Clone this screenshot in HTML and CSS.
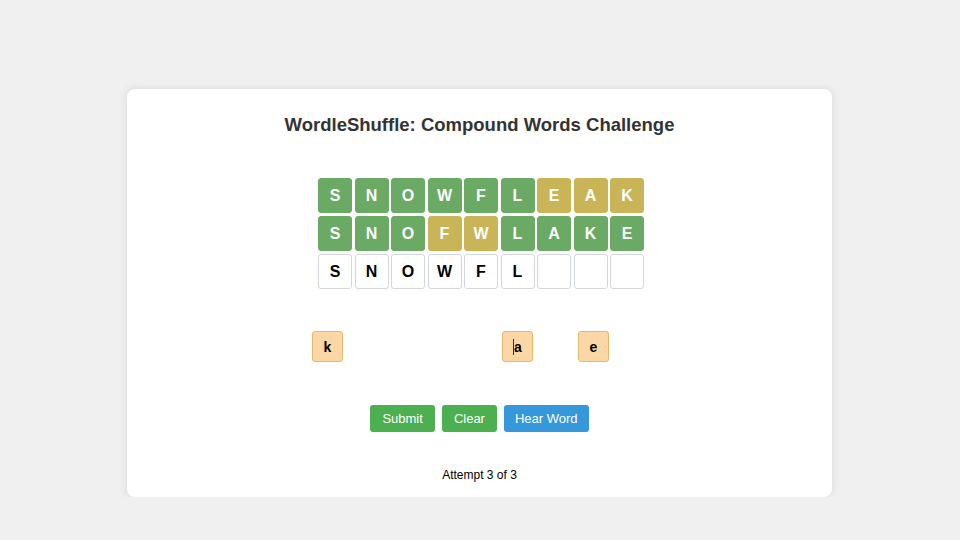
FILE: index.html
```html
<!DOCTYPE html>
<html lang="en">
<head>
    <meta charset="UTF-8">
    <meta name="viewport" content="width=device-width, initial-scale=1.0">
    <title>WordleShuffle</title>
    <link rel="stylesheet" href="styles.css">
</head>
<body>
    <div class="game-card">
        <h1 class="title">WordleShuffle: Compound Words Challenge</h1>

        <div class="board">
            <div class="row">
                <div class="tile correct">S</div>
                <div class="tile correct">N</div>
                <div class="tile correct">O</div>
                <div class="tile correct">W</div>
                <div class="tile correct">F</div>
                <div class="tile correct">L</div>
                <div class="tile present">E</div>
                <div class="tile present">A</div>
                <div class="tile present">K</div>
            </div>
            <div class="row">
                <div class="tile correct">S</div>
                <div class="tile correct">N</div>
                <div class="tile correct">O</div>
                <div class="tile present">F</div>
                <div class="tile present">W</div>
                <div class="tile correct">L</div>
                <div class="tile correct">A</div>
                <div class="tile correct">K</div>
                <div class="tile correct">E</div>
            </div>
            <div class="row">
                <div class="tile">S</div>
                <div class="tile">N</div>
                <div class="tile">O</div>
                <div class="tile">W</div>
                <div class="tile">F</div>
                <div class="tile">L</div>
                <div class="tile"></div>
                <div class="tile"></div>
                <div class="tile"></div>
            </div>
        </div>

        <div class="letter-pool">
            <div class="letter" style="left: 165px;">k</div>
            <div class="letter" style="left: 355px;"><span class="caret"></span>a</div>
            <div class="letter" style="left: 431px;">e</div>
        </div>

        <div class="controls">
            <button class="btn btn-green">Submit</button>
            <button class="btn btn-green">Clear</button>
            <button class="btn btn-blue">Hear Word</button>
        </div>

        <div class="attempts">Attempt 3 of 3</div>
    </div>
</body>
</html>
```

FILE: styles.css
```css
:root {
    --background-color: #f0f0f0;
    --text-color: #333;
    --correct: #6aaa64;
    --present: #c9b458;
    --tile-border: #d3d6da;
}

* {
    margin: 0;
    padding: 0;
    box-sizing: border-box;
    font-family: 'Liberation Sans', Arial, sans-serif;
}

body {
    background-color: var(--background-color);
    color: var(--text-color);
}

.game-card {
    width: 705px;
    margin: 89px 0 0 127px;
    padding: 25px 20px 14px;
    background-color: white;
    border-radius: 8px;
    box-shadow: 0 0 10px rgba(0, 0, 0, 0.1);
    text-align: center;
}

.title {
    font-size: 18.5px;
    line-height: 22px;
    font-weight: bold;
    color: #333;
}

.board {
    margin-top: 42px;
    padding-left: 3px;
    display: flex;
    flex-direction: column;
    align-items: center;
    gap: 3px;
}

.row {
    display: flex;
    gap: 2.5px;
}

.tile {
    width: 34px;
    height: 35px;
    border: 1px solid var(--tile-border);
    border-radius: 3px;
    display: flex;
    align-items: center;
    justify-content: center;
    font-size: 16px;
    font-weight: bold;
    color: #000;
    background-color: white;
}

.tile.correct {
    background-color: var(--correct);
    border-color: var(--correct);
    color: white;
}

.tile.present {
    background-color: var(--present);
    border-color: var(--present);
    color: white;
}

.letter-pool {
    position: relative;
    height: 31px;
    margin-top: 42px;
}

.letter {
    position: absolute;
    top: 0;
    width: 31px;
    height: 31px;
    background-color: #fad7a4;
    border: 1px solid #e9b96b;
    border-radius: 3px;
    display: flex;
    align-items: center;
    justify-content: center;
    font-size: 14px;
    font-weight: bold;
    color: #000;
}

.caret {
    width: 1px;
    height: 16px;
    background-color: #333;
}

.controls {
    margin-top: 43px;
    display: flex;
    justify-content: center;
    gap: 7px;
}

.btn {
    height: 27px;
    padding: 0 12px;
    border: none;
    border-radius: 3px;
    color: white;
    font-size: 13px;
    cursor: pointer;
}

.btn-green {
    background-color: #4caf50;
}

.btn-blue {
    padding: 0 11px;
    background-color: #3498db;
}

.attempts {
    margin-top: 35px;
    font-size: 12px;
    line-height: 16px;
    color: #000;
}
```
